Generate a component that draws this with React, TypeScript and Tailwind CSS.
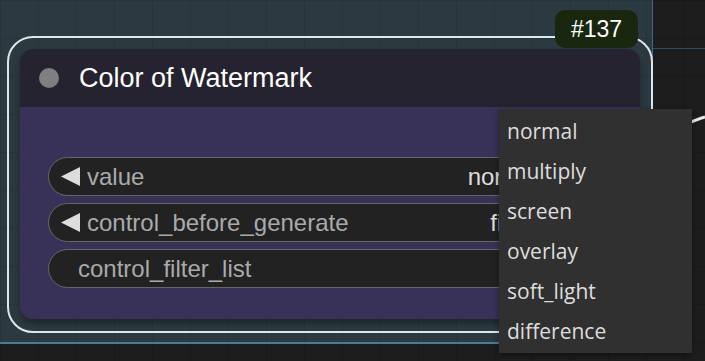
import React from "react";

const blendModes = ["normal", "multiply", "screen", "overlay", "soft_light", "difference"];

interface WidgetRowProps {
  label: string;
  value?: string;
  arrows?: boolean;
}

function ArrowLeft() {
  return (
    <svg width="19" height="19" viewBox="0 0 19 19" className="shrink-0">
      <polygon points="19,0 19,19 0,9.5" fill="#dddddd" />
    </svg>
  );
}

function ArrowRight() {
  return (
    <svg width="19" height="19" viewBox="0 0 19 19" className="shrink-0">
      <polygon points="0,0 0,19 19,9.5" fill="#dddddd" />
    </svg>
  );
}

function WidgetRow({ label, value, arrows }: WidgetRowProps) {
  return (
    <div className="flex h-[39px] items-center rounded-full border-[1.5px] border-[#676767] bg-[#222222] text-[24px] leading-none">
      {arrows ? (
        <div className="flex items-center pl-[12px]">
          <ArrowLeft />
          <span className="ml-[7px] text-[#aaaaaa]">{label}</span>
        </div>
      ) : (
        <span className="pl-[29px] text-[#aaaaaa]">{label}</span>
      )}
      <div className="flex-1" />
      {value && <span className="text-[#dddddd]">{value}</span>}
      {arrows && (
        <div className="ml-[32px] mr-[19px]">
          <ArrowRight />
        </div>
      )}
      {!arrows && <div className="w-[70px]" />}
    </div>
  );
}

export default function App() {
  return (
    <div
      className="relative h-[361px] w-[705px] overflow-hidden bg-[#1d1d1d] bg-[linear-gradient(to_right,#191919_1px,transparent_1px),linear-gradient(to_bottom,#191919_1px,transparent_1px)] bg-[size:38px_38px]"
      style={{ fontFamily: '"Liberation Sans", Arial, sans-serif' }}
    >
      {/* group backdrop */}
      <div className="absolute left-0 top-0 h-[344px] w-[653px] border-b-2 border-r-[1.5px] border-b-[#4c7a95] border-r-[#3d6788] bg-[#2b3a41] bg-[linear-gradient(to_right,#27353b_1px,transparent_1px),linear-gradient(to_bottom,#27353b_1px,transparent_1px)] bg-[size:38px_38px]" />
      <div className="absolute left-[653px] top-[48px] h-px w-[52px] bg-[#2f4a63]" />

      {/* link wire */}
      <svg className="absolute left-[688px] top-[110px]" width="17" height="20" viewBox="0 0 17 20">
        <path d="M0 13 C 6 11, 10 9, 17 7" stroke="#e8e8e8" strokeWidth="3" fill="none" />
      </svg>

      {/* selected node */}
      <div className="absolute left-[7px] top-[36px] w-[646px] rounded-[26px] border-2 border-[#dde6e9] p-[11px] pb-[12px]">
        <div className="overflow-hidden rounded-[13px] shadow-[0_4px_6px_rgba(0,0,0,0.35)]">
          <div className="flex h-[58px] items-center bg-[#25232f] pl-[19px]">
            <div className="h-[20px] w-[20px] rounded-full bg-[#7f7f7f]" />
            <span className="ml-[20px] text-[27px] leading-none text-white">Color of Watermark</span>
          </div>
          <div className="flex flex-col gap-[7px] bg-[#383258] px-[28px] pb-[31px] pt-[50px]">
            <WidgetRow label="value" value="normal" arrows />
            <WidgetRow label="control_before_generate" value="fixed" arrows />
            <WidgetRow label="control_filter_list" />
          </div>
        </div>
      </div>

      {/* node id badge */}
      <div className="absolute left-[555px] top-[10px] flex h-[38px] w-[83px] items-center justify-center rounded-[10px] bg-[#19270f] text-[23px] leading-none text-white">
        #137
      </div>

      {/* combo dropdown */}
      <div
        className="absolute left-[499px] top-[109px] w-[193px] bg-[#303030] py-[2px] shadow-[0_2px_6px_rgba(0,0,0,0.4)]"
        style={{ fontFamily: '"Open Sans", "Noto Sans", sans-serif' }}
      >
        {blendModes.map((mode) => (
          <div key={mode} className="flex h-[40px] items-center pl-[8px] text-[21px] leading-none text-[#dddddd]">
            {mode}
          </div>
        ))}
      </div>
    </div>
  );
}
